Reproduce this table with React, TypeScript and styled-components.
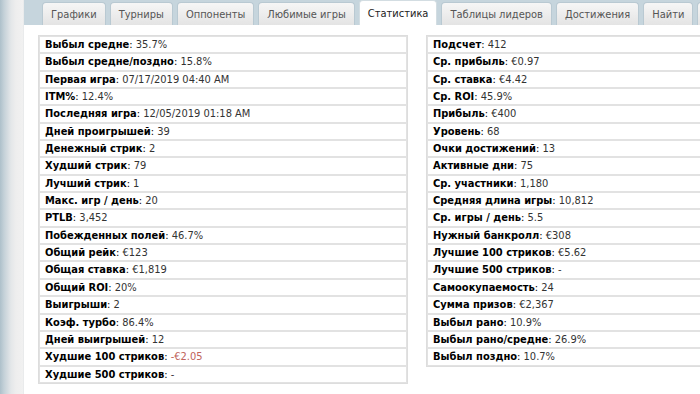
import React from 'react'
import styled, { createGlobalStyle } from 'styled-components'

const GlobalStyle = createGlobalStyle`
    html, body {
        margin: 0;
        padding: 0;
        background: #ffffff;
        overflow: hidden;
    }
    body {
        font-family: 'DejaVu Sans Condensed', 'DejaVu Sans', Verdana, sans-serif;
        font-stretch: condensed;
    }
`

type Stat = { label: string; value: string; negative?: boolean }

const TABS = [
    'Графики',
    'Турниры',
    'Оппоненты',
    'Любимые игры',
    'Статистика',
    'Таблицы лидеров',
    'Достижения',
    'Найти',
    'Настройки',
]

const LEFT_STATS: Stat[] = [
    { label: 'Выбыл средне', value: '35.7%' },
    { label: 'Выбыл средне/поздно', value: '15.8%' },
    { label: 'Первая игра', value: '07/17/2019 04:40 AM' },
    { label: 'ITM%', value: '12.4%' },
    { label: 'Последняя игра', value: '12/05/2019 01:18 AM' },
    { label: 'Дней проигрышей', value: '39' },
    { label: 'Денежный стрик', value: '2' },
    { label: 'Худший стрик', value: '79' },
    { label: 'Лучший стрик', value: '1' },
    { label: 'Макс. игр / день', value: '20' },
    { label: 'PTLB', value: '3,452' },
    { label: 'Побежденных полей', value: '46.7%' },
    { label: 'Общий рейк', value: '€123' },
    { label: 'Общая ставка', value: '€1,819' },
    { label: 'Общий ROI', value: '20%' },
    { label: 'Выигрыши', value: '2' },
    { label: 'Коэф. турбо', value: '86.4%' },
    { label: 'Дней выигрышей', value: '12' },
    { label: 'Худшие 100 стриков', value: '-€2.05', negative: true },
    { label: 'Худшие 500 стриков', value: '-' },
]

const RIGHT_STATS: Stat[] = [
    { label: 'Подсчет', value: '412' },
    { label: 'Ср. прибыль', value: '€0.97' },
    { label: 'Ср. ставка', value: '€4.42' },
    { label: 'Ср. ROI', value: '45.9%' },
    { label: 'Прибыль', value: '€400' },
    { label: 'Уровень', value: '68' },
    { label: 'Очки достижений', value: '13' },
    { label: 'Активные дни', value: '75' },
    { label: 'Ср. участники', value: '1,180' },
    { label: 'Средняя длина игры', value: '10,812' },
    { label: 'Ср. игры / день', value: '5.5' },
    { label: 'Нужный банкролл', value: '€308' },
    { label: 'Лучшие 100 стриков', value: '€5.62' },
    { label: 'Лучшие 500 стриков', value: '-' },
    { label: 'Самоокупаемость', value: '24' },
    { label: 'Сумма призов', value: '€2,367' },
    { label: 'Выбыл рано', value: '10.9%' },
    { label: 'Выбыл рано/средне', value: '26.9%' },
    { label: 'Выбыл поздно', value: '10.7%' },
]

function StatTable({ stats }: { stats: Stat[] }): JSX.Element {
    return (
        <StyledTable>
            <tbody>
                {stats.map(stat => (
                    <tr key={stat.label}>
                        <td>
                            <Label>{stat.label}</Label>: <Value negative={stat.negative}>{stat.value}</Value>
                        </td>
                    </tr>
                ))}
            </tbody>
        </StyledTable>
    )
}

export default function App(): JSX.Element {
    return (
        <>
            <GlobalStyle />
            <Page>
                <SideStrip />
                <Main>
                    <TabBar>
                        {TABS.map(tab => (
                            <Tab key={tab} active={tab === 'Статистика'}>
                                {tab}
                            </Tab>
                        ))}
                    </TabBar>
                    <Content>
                        <StatTable stats={LEFT_STATS} />
                        <StatTable stats={RIGHT_STATS} />
                    </Content>
                </Main>
            </Page>
        </>
    )
}

const Page = styled.div`
    display: flex;
    width: 700px;
    height: 394px;
    overflow: hidden;
`

const SideStrip = styled.div`
    flex: 0 0 24px;
    background: linear-gradient(to right, #adc0ca 0px, #c4d1d8 4px, #e4e7e9 11px, #eeeeee 16px, #f1f1f1 23px, #e2e5e7 24px);
`

const Main = styled.div`
    flex: 1;
    display: flex;
    flex-direction: column;
    min-width: 0;
`

const TabBar = styled.div`
    display: flex;
    align-items: flex-end;
    gap: 4px;
    height: 25px;
    padding-left: 18px;
    background: #c6d5dd;
    white-space: nowrap;
    overflow: hidden;
`

const Tab = styled.div<{ active?: boolean }>`
    flex: none;
    display: flex;
    align-items: center;
    height: ${p => (p.active ? '24px' : '22px')};
    padding: 0 8px;
    border: 1px solid ${p => (p.active ? '#d3dde2' : '#b9c9d2')};
    border-bottom: none;
    border-radius: 4px 4px 0 0;
    background: ${p => (p.active ? '#ffffff' : 'linear-gradient(#f6f6f6, #e4e4e4)')};
    color: ${p => (p.active ? '#222222' : '#555555')};
    font-size: 11px;
`

const Content = styled.div`
    display: flex;
    align-items: flex-start;
    gap: 18px;
    padding: 10px 0 0 14px;
`

const StyledTable = styled.table`
    flex: none;
    width: 370px;
    border: 1px solid #dddddd;
    border-spacing: 0;
    border-collapse: separate;
    font-size: 11px;
    line-height: 13.35px;

    td {
        border: 1px solid #e2e2e2;
        padding: 1px 5px 1px 5px;
        white-space: nowrap;
        color: #000000;
    }
`

const Label = styled.b`
    font-weight: bold;
    color: #000000;
`

const Value = styled.span<{ negative?: boolean }>`
    color: ${p => (p.negative ? '#c0635c' : '#333333')};
`
